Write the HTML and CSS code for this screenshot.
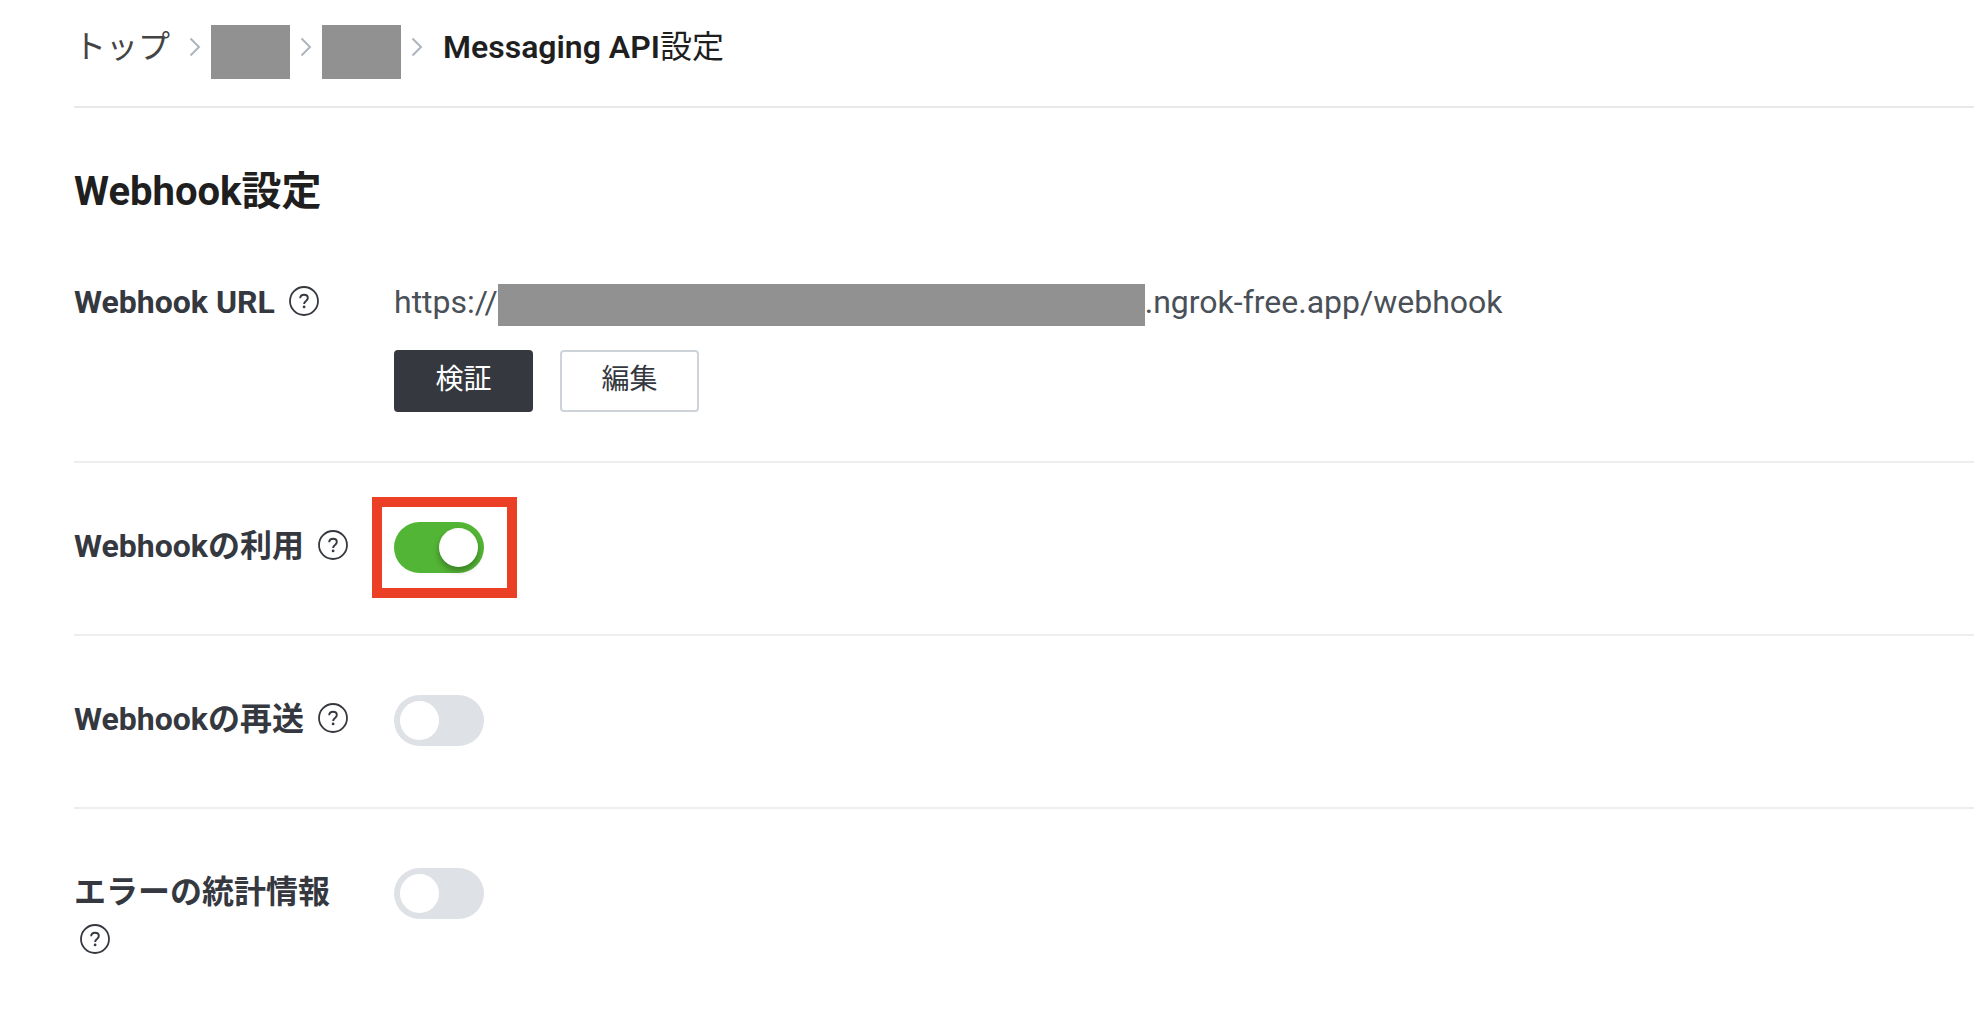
FILE: index.html
```html
<!DOCTYPE html>
<html lang="ja">
<head>
<meta charset="utf-8">
<meta name="viewport" content="width=device-width, initial-scale=1">
<title>Messaging API設定</title>
<link rel="stylesheet" href="styles.css">
</head>
<body>
<svg class="sprite" aria-hidden="true">
  <symbol id="chevron" viewBox="0 0 12 20"><path d="M1.5 1.5 10 10 1.5 18.5" fill="none" stroke="currentColor" stroke-width="2"/></symbol>
  <symbol id="help" viewBox="0 0 30 30">
    <circle cx="15" cy="15" r="14" fill="none" stroke="currentColor" stroke-width="1.8"/>
    <path d="M11.2 12.2C11.2 9.9 12.8 8.7 15 8.7s3.8 1.2 3.8 3.2c0 1.4-.8 2.2-1.8 3-1.2.9-1.9 1.5-1.9 3.1" fill="none" stroke="currentColor" stroke-width="1.9"/>
    <circle cx="15.1" cy="20.9" r="1.4" fill="currentColor"/>
  </symbol>
</svg>
<main class="page">
  <nav class="breadcrumb">
    <a class="crumb" href="#">トップ</a>
    <svg class="chevron"><use href="#chevron"/></svg>
    <span class="crumb-mask"></span>
    <svg class="chevron"><use href="#chevron"/></svg>
    <span class="crumb-mask"></span>
    <svg class="chevron"><use href="#chevron"/></svg>
    <span class="crumb-current"><b>Messaging API</b>設定</span>
  </nav>

  <h1 class="title">Webhook設定</h1>

  <section class="row row-url">
    <div class="label">Webhook URL <button class="help" type="button" aria-label="ヘルプ"><svg><use href="#help"/></svg></button></div>
    <div class="value">
      <div class="url"><span>https://</span><span class="url-mask"></span><span>.ngrok-free.app/webhook</span></div>
      <div class="actions">
        <button class="btn btn-dark" type="button">検証</button>
        <button class="btn" type="button">編集</button>
      </div>
    </div>
  </section>

  <section class="row">
    <div class="label"><label for="use">Webhookの利用</label> <button class="help" type="button" aria-label="ヘルプ"><svg><use href="#help"/></svg></button></div>
    <div class="value"><span class="marked"><input class="toggle" id="use" type="checkbox" checked></span></div>
  </section>

  <section class="row">
    <div class="label"><label for="resend">Webhookの再送</label> <button class="help" type="button" aria-label="ヘルプ"><svg><use href="#help"/></svg></button></div>
    <div class="value"><input class="toggle" id="resend" type="checkbox"></div>
  </section>

  <section class="row">
    <div class="label"><label for="stats">エラーの統計情報</label> <button class="help" type="button" aria-label="ヘルプ"><svg><use href="#help"/></svg></button></div>
    <div class="value"><input class="toggle" id="stats" type="checkbox"></div>
  </section>
</main>
</body>
</html>
```
FILE: styles.css
```css
* { box-sizing: border-box; }

body {
  margin: 0;
  background: #fff;
  color: #35383f;
  font-family: Roboto, "Noto Sans CJK JP", sans-serif;
  font-size: 32px;
  line-height: 48px;
}

.sprite { display: none; }

.page { padding-left: 74px; }

.breadcrumb {
  display: flex;
  align-items: center;
  height: 108px;
  padding-bottom: 12px;
  border-bottom: 2px solid #e8e8e8;
}
.crumb {
  width: 115px;
  color: #444;
  text-decoration: none;
}
.chevron {
  flex: none;
  width: 12px;
  height: 20px;
  color: #adb5bf;
}
.crumb-mask {
  width: 79px;
  height: 54px;
  margin: 10px 10px 0;
  background: #919191;
}
.crumb-current { margin-left: 20px; color: #1f1f1f; }
.crumb-current b { font-weight: 600; }

.title {
  margin: 0;
  padding: 56px 0 52px;
  color: #1f1f1f;
  font-size: 40px;
  line-height: 56px;
}

.row {
  display: grid;
  grid-template-columns: 280px 1fr;
  column-gap: 40px;
  padding: 59px 0 61px;
  border-bottom: 2px solid #eee;
}
.row:last-child { border-bottom: 0; }
.row-url { padding: 6px 0 49px; }

.label { font-weight: 700; }

.help {
  width: 30px;
  height: 30px;
  margin: 0 0 0 6px;
  padding: 0;
  border: 0;
  background: none;
  color: #35383f;
  vertical-align: -3px;
  cursor: pointer;
}
.help svg { display: block; width: 30px; height: 30px; }

.row:not(.row-url) .value { height: 51px; }

.url {
  display: flex;
  align-items: flex-end;
  color: #495057;
}
.url-mask {
  width: 647px;
  height: 42px;
  background: #919191;
}

.actions { display: flex; gap: 27px; margin-top: 24px; }
.btn {
  width: 139px;
  height: 62px;
  padding: 0 0 2px;
  border: 2px solid #ced2d9;
  border-radius: 4px;
  background: #fff;
  color: #35383f;
  font: 28px/40px Roboto, "Noto Sans CJK JP", sans-serif;
}
.btn-dark {
  border-color: #35383f;
  background: #35383f;
  color: #fff;
}

.toggle {
  display: block;
  width: 90px;
  height: 51px;
  margin: 0;
  padding: 6px;
  border-radius: 26px;
  background: #dee1e6;
  appearance: none;
  cursor: pointer;
}
.toggle::before {
  content: "";
  display: block;
  width: 39px;
  height: 39px;
  border-radius: 50%;
  background: #fff;
}
.toggle:checked { background: #53b535; }
.toggle:checked::before {
  margin-left: auto;
  box-shadow: 0 4px 6px rgba(0, 0, 0, .3);
}

/* Callout frame drawn around the switch, outside the flow */
.marked {
  display: block;
  position: relative;
  width: 90px;
}
.marked::after {
  content: "";
  position: absolute;
  inset: -25px -33px -25px -22px;
  border: 10px solid #ec4026;
  pointer-events: none;
}
```
